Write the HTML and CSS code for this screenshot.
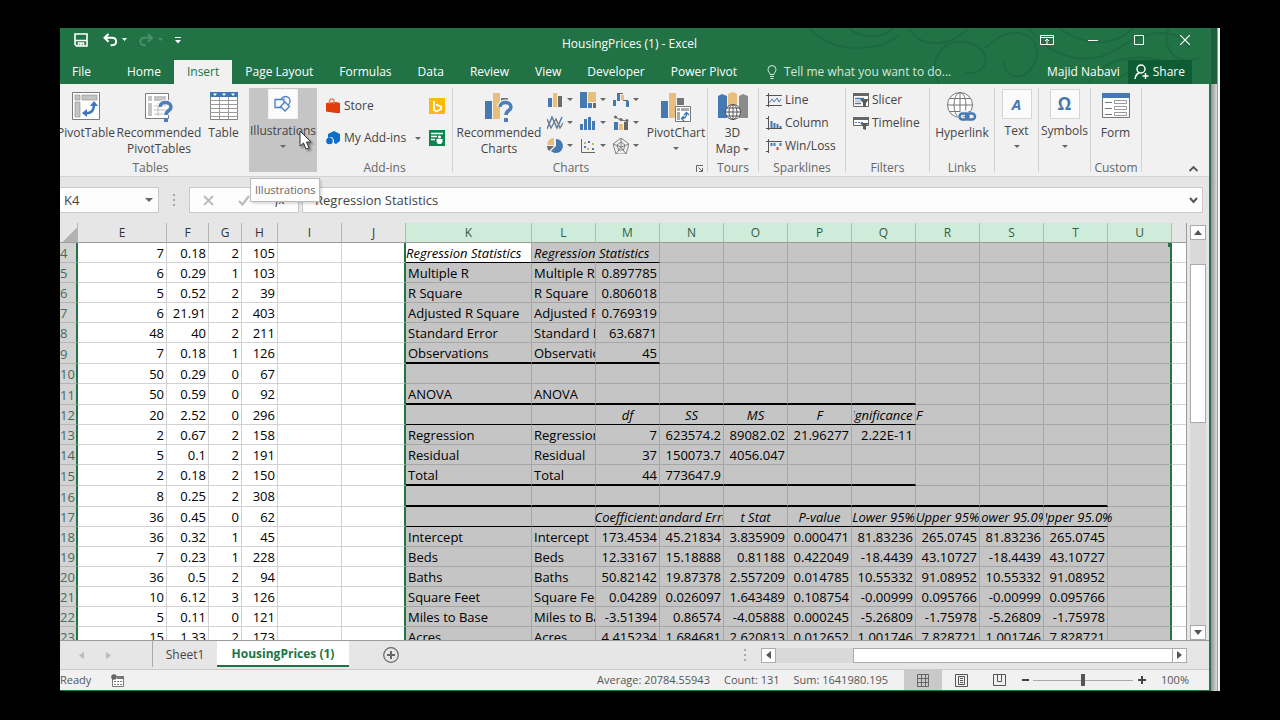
FILE: index.html
```html
<!DOCTYPE html>
<html lang="en">
<head>
<meta charset="utf-8">
<title>HousingPrices (1) - Excel</title>
<link rel="stylesheet" href="styles.css">
</head>
<body>
<main class="window">
  <header class="top">
    <svg class="swirls" width="420" height="56" viewBox="0 0 420 56" fill="none" stroke="#1d693f" stroke-width="2"><path d="M20 0c20 22 60 28 90 8M60 0c10 10 34 12 44 0M150 56c-14-30 10-50 34-40s10 34-8 28M196 20c30-30 60-10 50 14s-34 14-30 0M240 0c20 30 60 40 90 20s60-20 70 0M270 0c24 18 54 20 74 0M300 56c10-24 50-34 80-20M330 50c20-14 40-10 50 6M120 0c10 20 40 20 60 0M380 0c-10 20 10 40 30 30"/></svg>
    <div class="titlebar">
      <div class="quick">
        <button aria-label="Save"><svg width="14" height="14" viewBox="0 0 14 14" fill="none" stroke="#fff" stroke-width="1.6"><path d="M1 1h12v12H2.500L1 11.500zM1 7.500h12M4.500 13v-3h5v3M7 10.500v2"/></svg></button>
        <button aria-label="Undo"><svg width="24" height="14" viewBox="0 0 24 14" fill="none" stroke="#fff" stroke-width="2"><path d="M5.500 1 1.500 4.800l4 4M2 4.800h7c5 0 6 7 0 7.500H7.500"/><path d="M19 5h5l-2.500 3z" fill="#fff" stroke="none"/></svg></button>
        <button aria-label="Redo"><svg width="24" height="14" viewBox="0 0 24 14" fill="none" stroke="#4b8f69" stroke-width="2"><path d="m9 1 4 3.800-4 4M12.500 4.800h-7c-5 0-6 7 0 7.500H7"/><path d="M19 5h5l-2.500 3z" fill="#4b8f69" stroke="none"/></svg></button>
        <button aria-label="Customize"><svg width="6" height="7" viewBox="0 0 6 7" fill="#fff"><path d="M0 0h6v1H0zM0 3h6L3 6.500z"/></svg></button>
      </div>
      <h1 class="title">HousingPrices (1) - Excel</h1>
      <div class="controls">
        <button aria-label="Ribbon options"><svg width="14" height="12" viewBox="0 0 14 12" fill="none" stroke="#fff"><path d="M.5 1.500h13v9H.5zM.5 3.500h13M7 10V5M5 7l2-2 2 2"/></svg></button>
        <button aria-label="Minimize"><svg width="10" height="10" stroke="#fff"><path d="M0 5.500h10"/></svg></button>
        <button aria-label="Maximize"><svg width="10" height="10" fill="none" stroke="#fff"><path d="M.5.5h9v9h-9z"/></svg></button>
        <button aria-label="Close"><svg width="10" height="10" stroke="#fff" stroke-width="1.200"><path d="m0 0 10 10M10 0 0 10"/></svg></button>
      </div>
    </div>
    <nav class="tabs">
      <button class="file">File</button><button>Home</button><button class="on">Insert</button><button>Page Layout</button><button>Formulas</button><button>Data</button><button>Review</button><button>View</button><button>Developer</button><button>Power Pivot</button>
      <button class="tell"><svg width="10" height="14" viewBox="0 0 10 14" fill="none" stroke="#d5e8dc"><path d="M3 9.500C3 7.500 1 7 1 4.500a4 4 0 0 1 8 0C9 7 7 7.500 7 9.500zM3 11.500h4M3.500 13.500h3"/></svg>Tell me what you want to do...</button>
      <span class="user">Majid Nabavi</span>
      <button class="share"><svg width="15" height="16" viewBox="0 0 15 16" fill="none" stroke="#fff" stroke-width="1.500"><circle cx="7" cy="5" r="4"/><path d="M1 15c.5-3.500 2-5.500 4.500-6.500M11.500 9v6M8.500 12h6"/></svg>Share</button>
    </nav>
  </header>

  <section class="ribbon">
    <div class="group g-tables">
      <div class="items">
        <button class="big b60"><svg width="28" height="32" viewBox="0 0 28 32"><path d="M.5 1.500h27v27H.5z" fill="#fff" stroke="#7b7b7b"/><path d="M3 4h5v5H3zM10 4h15v5H10zM3 11h5v15H3z" fill="#c4c4c4" stroke="#8b8b8b" stroke-width=".6"/><path d="M12 22c7 1 10-2 10-9" fill="none" stroke="#3f76b8" stroke-width="2.500"/><path d="m18 15 4-5 4 5zM15 18l-5 4 5 4z" fill="#3f76b8"/></svg>PivotTable</button>
        <button class="big b86"><svg width="28" height="32" viewBox="0 0 28 32"><path d="M.5 2.500h23v25H.5z" fill="#fff" stroke="#7b7b7b"/><path d="M3 5h4v5H3zM9 5h12v5H9zM3 12h4v13H3z" fill="#c4c4c4"/><path d="M9 15h12M9 19h12M9 23h10M13 12v13" stroke="#bbb"/><path d="M15 16c0-6 11-6 11 0 0 4-5 3-5 8" fill="none" stroke="#f1f1f1" stroke-width="6"/><path d="M15 16c0-6 11-6 11 0 0 4-5 3-5 8" fill="none" stroke="#4b7fbb" stroke-width="3.500"/><path d="M19 27h4v4h-4z" fill="#4b7fbb"/></svg><span>Recommended</span><span>PivotTables</span></button>
        <button class="big b43"><svg width="28" height="32" viewBox="0 0 28 32"><path d="M.5 1.500h27v27H.5z" fill="#fff" stroke="#858585"/><path d="M0 1h28v5H0z" fill="#3f76b8"/><path d="M3 2.500h4l-2 2.500zM12 2.500h4L14 5zM21 2.500h4L23 5z" fill="#fff"/><path d="M0 9.500h28M0 13.500h28M0 17.500h28M0 21.500h28M0 25.500h28M9.500 6v22M18.500 6v22" stroke="#9a9a9a"/></svg>Table</button>
      </div>
      <h2>Tables</h2>
    </div>
    <button class="drop illus"><span class="tile"><svg width="18" height="18" viewBox="0 0 18 18" fill="#f4f6fa" stroke="#4c7fbe" stroke-width="1.300"><circle cx="11.500" cy="6" r="4.500"/><path d="M1 4.500h9v8H1z"/><path d="m11 7 4.500 4.500L11 16l-4.500-4.500z"/></svg></span>Illustrations<i class="arrow"></i></button>
    <div class="group g-addins">
      <div class="items addins">
        <button class="small"><svg width="14" height="16" viewBox="0 0 14 16"><path d="m0 5 10-1v11L0 13.500zM10 4l4 1v10h-4z" fill="#e23c0c"/><path d="M3.500 6V3.500C4 0 8 0 8 3.500V6" fill="none" stroke="#ef6e49" stroke-width="1.300"/></svg>Store</button>
        <button class="icon" aria-label="Bing Maps"><svg width="16" height="16" viewBox="0 0 16 16"><path d="M0 0h16v16H0z" fill="#fbb912"/><path d="M5 3v9l2.500 1.500L12 11V8.500L7 6.500" fill="none" stroke="#fff" stroke-width="1.800"/></svg></button>
        <button class="small"><svg width="14" height="14" viewBox="0 0 14 14" fill="#0b6fc4"><path d="M8 0l6 3v7l-4 3-2-1V9L6 6 2 7V3z"/><circle cx="3.500" cy="10" r="3.300"/></svg>My Add-ins<i class="arrow side"></i></button>
        <button class="icon" aria-label="People Graph"><svg width="16" height="16" viewBox="0 0 16 16"><path d="M0 0h16v16H0z" fill="#12834f"/><path d="M2 3.500h12M2 6.500h6M2 9.500h4" stroke="#fff" stroke-width="1.300"/><circle cx="10.500" cy="7" r="1.600" fill="#fff"/><path d="M7.500 9h6v3l-1.500 2H9l-1.500-2z" fill="#fff"/></svg></button>
      </div>
      <h2>Add-ins</h2>
    </div>
    <div class="group g-charts">
      <div class="items">
        <button class="big b92"><svg width="28" height="32" viewBox="0 0 28 32"><path d="M0 10h7v18H0z" fill="#4679b2"/><path d="M8 2h7v26H8z" fill="#e9bd7c"/><path d="M16 7h7v5h-7z" fill="#767676"/><path d="M15 16c0-6 11-6 11 0 0 4-5 3-5 8" fill="none" stroke="#f1f1f1" stroke-width="6"/><path d="M15 16c0-6 11-6 11 0 0 4-5 3-5 8" fill="none" stroke="#4b7fbb" stroke-width="3.500"/><path d="M19 27h4v4h-4z" fill="#4b7fbb"/></svg><span>Recommended</span><span>Charts</span></button>
        <div class="gallery">
          <button aria-label="Column"><svg width="16" height="16"><path d="M1 6h4v9H1z" fill="#4679b2"/><path d="M6 1h4v14H6z" fill="#e9bd7c"/><path d="M11 4h4v11h-4z" fill="#6b6b6b"/></svg><i class="arrow"></i></button>
          <button aria-label="Hierarchy"><svg width="16" height="16"><path d="M0 0h7v16H0z" fill="#4679b2"/><path d="M8 0h8v10H8z" fill="#e9bd7c"/><path d="M8 11h4v5H8z" fill="#4679b2"/><path d="M13 11h3v5h-3z" fill="#6b6b6b"/></svg><i class="arrow"></i></button>
          <button aria-label="Waterfall"><svg width="16" height="16"><path d="M0 8h3v6H0zM4 2h3v7H4zM13 9h3v6h-3z" fill="#4679b2"/><path d="M8 3h3v5H8z" fill="#e9bd7c"/><path d="M4 1.500h6M10 8.500h5" stroke="#666"/></svg><i class="arrow"></i></button>
          <button aria-label="Line"><svg width="16" height="16" fill="none" stroke-width="1.400"><path d="m0 14 5-12 5 11 5-11" stroke="#4679b2"/><path d="m0 4 4 9 5-9 4 9 3-5" stroke="#777"/></svg><i class="arrow"></i></button>
          <button aria-label="Statistic"><svg width="16" height="16" fill="#4679b2"><path d="M0 9h3v6H0zM4 4h3v11H4zM8 2h3v13H8zM12 6h3v9h-3z"/></svg><i class="arrow"></i></button>
          <button aria-label="Combo"><svg width="16" height="16"><path d="M1 7h4v8H1z" fill="#4679b2"/><path d="M6 9h4v6H6z" fill="#e9bd7c"/><path d="M11 7h4v8h-4z" fill="#666"/><path d="m2 2 6 3 6 1" stroke="#666" fill="none"/><circle cx="2.500" cy="2" r="1.500" fill="#666"/><circle cx="8" cy="4.500" r="1.500" fill="#666"/><circle cx="14" cy="5.500" r="1.500" fill="#666"/></svg><i class="arrow"></i></button>
          <button aria-label="Pie"><svg width="16" height="16"><path d="M9 1a7 7 0 1 1-5 12l5-5z" fill="#4679b2"/><path d="M7 0v7H0a7 7 0 0 1 7-7z" fill="#e9bd7c"/><path d="M0 8h7l-5 5a7 7 0 0 1-2-5z" fill="#6b6b6b"/></svg><i class="arrow"></i></button>
          <button aria-label="Scatter"><svg width="16" height="16"><path d="M1.500 1v13.500H15" stroke="#666" fill="none"/><path d="M4 8h2v2H4zM8 3h2v2H8zM12 10h2v2h-2z" fill="#4679b2"/><path d="M7 10h2v2H7zM12 5h2v2h-2zM4 4h2v2H4z" fill="#c3b95f"/></svg><i class="arrow"></i></button>
          <button aria-label="Radar"><svg width="16" height="16" viewBox="0 0 16 16" fill="none" stroke="#777" stroke-width=".9"><path d="m8 0 8 6-3 10H3L0 6zM8 4l4 3-1.500 5h-5L4 7zM8 0v9M16 6 8 9l5 7M3 16l5-7-8-3"/></svg><i class="arrow"></i></button>
        </div>
        <button class="big b60"><svg width="30" height="32" viewBox="0 0 30 32"><path d="M0 10h7v17H0z" fill="#4679b2"/><path d="M8 2h7v25H8z" fill="#e9bd7c"/><path d="M16 7h7v7h-7z" fill="#767676"/><path d="M14.500 15.500h15v15h-15z" fill="#fff" stroke="#777"/><path d="M16 17h3v3h-3zM20 17h8v3h-8zM16 21h3v8h-3z" fill="#aaa"/><path d="M21 27.500c3 0 4.500-1 4.500-5M23 25l-2.500 2.500L23 30M23 24l2.500-2.500L28 24" fill="none" stroke="#3f76b8" stroke-width="1.300"/></svg>PivotChart<i class="arrow"></i></button>
      </div>
      <h2>Charts<svg class="launch" width="7" height="7" viewBox="0 0 7 7" fill="none" stroke="#666"><path d="M.5 7V.5H7M2.500 2.500l4 4M6.500 3v3.500H3"/></svg></h2>
    </div>
    <div class="group g-tours"><div class="items">
      <button class="big b49"><svg width="30" height="32" viewBox="0 0 30 32"><path d="m0 5 4-2 5 2v22H0z" fill="#4679b2"/><path d="m10 3 5-2 4 2v22h-9z" fill="#e9bd7c"/><path d="m21 5 4-2 5 2v22h-9z" fill="#8b8b8b"/><circle cx="15" cy="21" r="7.500" fill="#fff" stroke="#555"/><path d="M15 13.500v15M7.500 21h15M9 17h12M9 25h12" stroke="#555" fill="none"/><ellipse cx="15" cy="21" rx="4" ry="7.500" fill="none" stroke="#555"/></svg><span>3D</span><span>Map <i class="arrow side"></i></span></button>
    </div><h2>Tours</h2></div>
    <div class="group g-spark"><div class="items list">
      <button class="small"><svg width="16" height="14" fill="none" stroke="#555"><path d="M2.500 0v14M0 2.500h16M0 12.500h16"/><path d="m3 10 3-4 2 3 3-4 2 4 2-3" stroke="#4679b2"/></svg>Line</button>
      <button class="small"><svg width="16" height="14" fill="none" stroke="#555"><path d="M2.500 0v14M0 2.500h3M0 12.500h16"/><path d="M5.500 12V5M8.500 12V7M11.500 12V8M14.500 12v-2" stroke="#4679b2" stroke-width="2"/></svg>Column</button>
      <button class="small"><svg width="16" height="14" fill="none" stroke="#555"><path d="M2.500 0v14M0 2.500h16M0 12.500h3"/><path d="M5.500 4v3M8.500 4v3M14.500 4v3" stroke="#4679b2" stroke-width="2"/><path d="M11.500 8v3" stroke="#d43" stroke-width="2"/></svg>Win/Loss</button>
    </div><h2>Sparklines</h2></div>
    <div class="group g-filters"><div class="items list">
      <button class="small"><svg width="16" height="16" viewBox="0 0 16 16"><path d="M.5 1.500h15v13H.5z" fill="#fff" stroke="#666"/><path d="M0 1h16v3H0z" fill="#666"/><path d="M2 6.500h9M2 11.500h6" stroke="#4679b2" stroke-width="1.600"/><path d="M2 9h6" stroke="#999"/><path d="M7 7h9l-3 4v4l-3-1v-3z" fill="#5c5c5c"/></svg>Slicer</button>
      <button class="small"><svg width="16" height="16" viewBox="0 0 16 16"><path d="M.5 2.500h15v8H.5z" fill="#fff" stroke="#666"/><path d="M0 2h16v3H0z" fill="#666"/><path d="M2 7.500h8" stroke="#4679b2" stroke-dasharray="2 1"/><path d="M7 8h9l-3 3v4l-3-1v-3z" fill="#5c5c5c"/></svg>Timeline</button>
    </div><h2>Filters</h2></div>
    <div class="group g-links"><div class="items">
      <button class="big b64"><svg width="30" height="32" viewBox="0 0 30 32" fill="none" stroke="#777"><circle cx="13" cy="14" r="12.500" fill="#fff"/><path d="M13 1.500v25M.5 14h25M3 7.500h20M3 20.500h20"/><ellipse cx="13" cy="14" rx="6" ry="12.500"/><rect x="13" y="22" width="9" height="7" rx="3.500" stroke="#f1f1f1" stroke-width="5"/><rect x="12.500" y="22.500" width="9" height="6" rx="3" stroke="#4679b2" stroke-width="2.500"/><rect x="19" y="22.500" width="9" height="6" rx="3" stroke="#4679b2" stroke-width="2.500"/></svg>Hyperlink</button>
    </div><h2>Links</h2></div>
    <button class="drop d-text"><span class="tile"><b class="glyph">A</b></span>Text<i class="arrow"></i></button>
    <button class="drop d-sym"><span class="tile"><b class="glyph omega">Ω</b></span>Symbols<i class="arrow"></i></button>
    <div class="group g-custom"><div class="items">
      <button class="big b49"><svg width="28" height="32" viewBox="0 0 28 32"><path d="M.5 2.500h27v24H.5z" fill="#fff" stroke="#777"/><path d="M0 2h28v5H0z" fill="#4679b2"/><path d="M3 11.500h7M3 17.500h7M3 23.500h7" stroke="#777"/><path d="M12.500 9.500h12v3h-12zM12.500 15.500h12v3h-12zM12.500 21.500h12v3h-12z" fill="none" stroke="#999"/></svg>Form</button>
    </div><h2>Custom</h2></div>
    <button class="collapse" aria-label="Collapse ribbon"><svg width="9" height="6" fill="none" stroke="#555" stroke-width="1.800"><path d="m.5 5 4-4 4 4"/></svg></button>
    <div class="tooltip">Illustrations</div>
    <svg class="pointer" width="14" height="21" viewBox="0 0 14 21"><path d="M1 1v15l3.500-3 2.500 6 3-1.200L7.500 12H12z" fill="#fff" stroke="#333"/></svg>
  </section>

  <div class="formula">
    <label class="name"><input value="K4" aria-label="Name box"><i class="arrow wide"></i></label>
    <span class="dots"></span>
    <div class="fx">
      <button aria-label="Cancel"><svg width="11" height="11" stroke="#bbb" stroke-width="1.800"><path d="m1 1 9 9M10 1l-9 9"/></svg></button>
      <button aria-label="Enter"><svg width="12" height="11" stroke="#bbb" stroke-width="2.200" fill="none"><path d="m1 6 3.500 3.500L11 1"/></svg></button>
      <button aria-label="Insert function"><em>fx</em></button>
    </div>
    <label class="entry"><input value="Regression Statistics" aria-label="Formula"><svg width="9" height="7" fill="none" stroke="#555" stroke-width="2"><path d="m1 1 3.500 4L8 1"/></svg></label>
  </div>

  <section class="sheet">
    <div class="cells">
      <table>
        <colgroup><col class="c-row"><col class="c-e"><col class="c-f"><col class="c-g"><col class="c-h"><col class="c"><col class="c"><col class="c-k"><col class="c"><col class="c"><col class="c"><col class="c"><col class="c"><col class="c"><col class="c"><col class="c"><col class="c"><col class="c"><col></colgroup>
        <thead><tr><th class="corner"></th><th>E</th><th>F</th><th>G</th><th>H</th><th>I</th><th>J</th><th>K</th><th>L</th><th>M</th><th>N</th><th>O</th><th>P</th><th>Q</th><th>R</th><th>S</th><th>T</th><th>U</th><th></th></tr></thead>
        <tbody>
        <tr class="thin to-m"><th>4</th><td>7</td><td>0.18</td><td>2</td><td>105</td><td></td><td></td><td class="active">Regression Statistics</td><td class="it spill">Regression Statistics</td><td></td><td></td><td></td><td></td><td></td><td></td><td></td><td></td><td class="corner-mark"></td><td></td></tr>
        <tr><th>5</th><td>6</td><td>0.29</td><td>1</td><td>103</td><td></td><td></td><td>Multiple R</td><td>Multiple R</td><td>0.897785</td><td></td><td></td><td></td><td></td><td></td><td></td><td></td><td></td><td></td></tr>
        <tr><th>6</th><td>5</td><td>0.52</td><td>2</td><td>39</td><td></td><td></td><td>R Square</td><td>R Square</td><td>0.806018</td><td></td><td></td><td></td><td></td><td></td><td></td><td></td><td></td><td></td></tr>
        <tr><th>7</th><td>6</td><td>21.91</td><td>2</td><td>403</td><td></td><td></td><td>Adjusted R Square</td><td>Adjusted R Square</td><td>0.769319</td><td></td><td></td><td></td><td></td><td></td><td></td><td></td><td></td><td></td></tr>
        <tr><th>8</th><td>48</td><td>40</td><td>2</td><td>211</td><td></td><td></td><td>Standard Error</td><td>Standard Error</td><td>63.6871</td><td></td><td></td><td></td><td></td><td></td><td></td><td></td><td></td><td></td></tr>
        <tr class="tall thick to-m"><th>9</th><td>7</td><td>0.18</td><td>1</td><td>126</td><td></td><td></td><td>Observations</td><td>Observations</td><td>45</td><td></td><td></td><td></td><td></td><td></td><td></td><td></td><td></td><td></td></tr>
        <tr><th>10</th><td>50</td><td>0.29</td><td>0</td><td>67</td><td></td><td></td><td></td><td></td><td></td><td></td><td></td><td></td><td></td><td></td><td></td><td></td><td></td><td></td></tr>
        <tr class="tall thick to-q"><th>11</th><td>50</td><td>0.59</td><td>0</td><td>92</td><td></td><td></td><td>ANOVA</td><td>ANOVA</td><td></td><td></td><td></td><td></td><td></td><td></td><td></td><td></td><td></td><td></td></tr>
        <tr class="thin to-q heads"><th>12</th><td>20</td><td>2.52</td><td>0</td><td>296</td><td></td><td></td><td></td><td></td><td><span>df</span></td><td><span>SS</span></td><td><span>MS</span></td><td><span>F</span></td><td class="spill"><span class="over-right">Significance F</span></td><td></td><td></td><td></td><td></td><td></td></tr>
        <tr><th>13</th><td>2</td><td>0.67</td><td>2</td><td>158</td><td></td><td></td><td>Regression</td><td>Regression</td><td>7</td><td>623574.2</td><td>89082.02</td><td>21.96277</td><td>2.22E-11</td><td></td><td></td><td></td><td></td><td></td></tr>
        <tr><th>14</th><td>5</td><td>0.1</td><td>2</td><td>191</td><td></td><td></td><td>Residual</td><td>Residual</td><td>37</td><td>150073.7</td><td>4056.047</td><td></td><td></td><td></td><td></td><td></td><td></td><td></td></tr>
        <tr class="tall thick to-q"><th>15</th><td>2</td><td>0.18</td><td>2</td><td>150</td><td></td><td></td><td>Total</td><td>Total</td><td>44</td><td>773647.9</td><td></td><td></td><td></td><td></td><td></td><td></td><td></td><td></td></tr>
        <tr class="tall thick to-t"><th>16</th><td>8</td><td>0.25</td><td>2</td><td>308</td><td></td><td></td><td></td><td></td><td></td><td></td><td></td><td></td><td></td><td></td><td></td><td></td><td></td><td></td></tr>
        <tr class="thin to-t heads"><th>17</th><td>36</td><td>0.45</td><td>0</td><td>62</td><td></td><td></td><td></td><td></td><td class="spill"><span class="over-left">Coefficients</span></td><td><span>Standard Error</span></td><td><span>t Stat</span></td><td><span>P-value</span></td><td><span>Lower 95%</span></td><td><span>Upper 95%</span></td><td><span>Lower 95.0%</span></td><td class="spill"><span class="over-right">Upper 95.0%</span></td><td></td><td></td></tr>
        <tr><th>18</th><td>36</td><td>0.32</td><td>1</td><td>45</td><td></td><td></td><td>Intercept</td><td>Intercept</td><td>173.4534</td><td>45.21834</td><td>3.835909</td><td>0.000471</td><td>81.83236</td><td>265.0745</td><td>81.83236</td><td>265.0745</td><td></td><td></td></tr>
        <tr><th>19</th><td>7</td><td>0.23</td><td>1</td><td>228</td><td></td><td></td><td>Beds</td><td>Beds</td><td>12.33167</td><td>15.18888</td><td>0.81188</td><td>0.422049</td><td>-18.4439</td><td>43.10727</td><td>-18.4439</td><td>43.10727</td><td></td><td></td></tr>
        <tr><th>20</th><td>36</td><td>0.5</td><td>2</td><td>94</td><td></td><td></td><td>Baths</td><td>Baths</td><td>50.82142</td><td>19.87378</td><td>2.557209</td><td>0.014785</td><td>10.55332</td><td>91.08952</td><td>10.55332</td><td>91.08952</td><td></td><td></td></tr>
        <tr><th>21</th><td>10</td><td>6.12</td><td>3</td><td>126</td><td></td><td></td><td>Square Feet</td><td>Square Feet</td><td>0.04289</td><td>0.026097</td><td>1.643489</td><td>0.108754</td><td>-0.00999</td><td>0.095766</td><td>-0.00999</td><td>0.095766</td><td></td><td></td></tr>
        <tr><th>22</th><td>5</td><td>0.11</td><td>0</td><td>121</td><td></td><td></td><td>Miles to Base</td><td>Miles to Base</td><td>-3.51394</td><td>0.86574</td><td>-4.05888</td><td>0.000245</td><td>-5.26809</td><td>-1.75978</td><td>-5.26809</td><td>-1.75978</td><td></td><td></td></tr>
        <tr><th>23</th><td>15</td><td>1.33</td><td>2</td><td>173</td><td></td><td></td><td>Acres</td><td>Acres</td><td>4.415234</td><td>1.684681</td><td>2.620813</td><td>0.012652</td><td>1.001746</td><td>7.828721</td><td>1.001746</td><td>7.828721</td><td></td><td></td></tr>
        </tbody>
      </table>
    </div>
    <div class="vscroll">
      <button aria-label="Scroll up"><svg width="8" height="5" fill="#555"><path d="M0 5 4 0l4 5z"/></svg></button>
      <div class="track"><div class="thumb"></div></div>
      <button aria-label="Scroll down"><svg width="8" height="5" fill="#555"><path d="M0 0h8L4 5z"/></svg></button>
    </div>
  </section>

  <nav class="sheets">
    <button class="step" aria-label="Previous sheet"><svg width="5" height="7" fill="#bbb"><path d="M5 0v7L0 3.500z"/></svg></button>
    <button class="step" aria-label="Next sheet"><svg width="5" height="7" fill="#bbb"><path d="M0 0v7l5-3.500z"/></svg></button>
    <button class="tab first">Sheet1</button>
    <button class="tab current">HousingPrices (1)</button>
    <button class="add" aria-label="New sheet"><svg width="16" height="16" fill="none" stroke="#666" stroke-width="1.200"><circle cx="8" cy="8" r="7.300"/><path d="M8 4v8M4 8h8" stroke-width="2"/></svg></button>
    <span class="dots"></span>
    <div class="hscroll">
      <button aria-label="Scroll left"><svg width="5" height="8" fill="#555"><path d="M5 0v8L0 4z"/></svg></button>
      <div class="space"></div><div class="thumb"></div>
      <button aria-label="Scroll right"><svg width="5" height="8" fill="#555"><path d="M0 0v8l5-4z"/></svg></button>
    </div>
  </nav>

  <footer class="status">
    <span>Ready</span>
    <button class="macro" aria-label="Record macro"><svg width="13" height="13"><path d="M1.500 5v7.500h11V2.500H6" fill="#fff" stroke="#777"/><path d="M6 2h7v3H6z" fill="#777"/><path d="M3 7.500h8M3 10.500h8" stroke="#777" stroke-dasharray="2 1"/><circle cx="3" cy="3" r="2.800" fill="#666"/></svg></button>
    <span class="stats"><span>Average: 20784.55943</span><span>Count: 131</span><span>Sum: 1641980.195</span></span>
    <button class="view on" aria-label="Normal view"><svg width="12" height="13" fill="none" stroke="#666"><path d="M.5.5h11v12H.5zM4.500 0v13M8.500 0v13M0 4.500h12M0 8.500h12"/></svg></button>
    <button class="view" aria-label="Page layout view"><svg width="13" height="13" fill="none" stroke="#555"><path d="M.5.5h12v12H.5zM3.500 2.500h6v8h-6zM5 4.500h3M5 6.500h3M5 8.500h3"/></svg></button>
    <button class="view" aria-label="Page break view"><svg width="13" height="12" fill="none" stroke="#555"><path d="M.5.5h12v11H.5zM4.500 0v7.500h4V0"/></svg></button>
    <button class="zoom" aria-label="Zoom out"><svg width="7" height="8" stroke="#444" stroke-width="2"><path d="M0 4h7"/></svg></button>
    <input class="slider" type="range" value="50" aria-label="Zoom">
    <button class="zoom" aria-label="Zoom in"><svg width="8" height="8" stroke="#444" stroke-width="2"><path d="M0 4h8M4 0v8"/></svg></button>
    <span class="percent">100%</span>
  </footer>
</main>
<aside class="edge"></aside>
<aside class="behind"></aside>
</body>
</html>
```

FILE: styles.css
```css
* { box-sizing: border-box; }
body { margin: 0; background: #000; height: 100vh; padding: 28px 60px 29px; display: flex; font: 12px/16px "Open Sans", "Noto Sans", sans-serif; color: #444; }
button, input { font: inherit; color: inherit; background: none; border: 0; padding: 0; margin: 0; }
button { white-space: nowrap; }
svg { display: block; flex: none; }
h1, h2 { margin: 0; font: inherit; }

.window { flex: 1; min-width: 0; display: flex; flex-direction: column; background: #e6e6e6; border-bottom: 1px solid #217346; overflow: hidden; }
.edge { flex: 0 0 8px; border-left: 2px solid #2c6e52; background: linear-gradient(#1c6039 56px, transparent 56px), linear-gradient(90deg, #929292, #dadada); }
.behind { flex: 0 0 3px; background: #f2f5f6; border-left: 1px solid #999; }

/* Title bar and tabs */
.top { position: relative; background: #217346; color: #fff; }
.swirls { position: absolute; right: 0; top: 0; }
.titlebar { position: relative; display: grid; grid-template-columns: 1fr auto 1fr; align-items: center; height: 32px; }
.quick { display: flex; align-items: center; gap: 12px; padding: 0 0 8px 14px; }
.quick button:nth-child(2) { margin-left: 3px; }
.title { padding-right: 10px; }
.controls { display: flex; justify-content: flex-end; padding: 0 1px 8px 0; }
.controls button { width: 46px; height: 24px; display: flex; align-items: center; justify-content: center; }
.tabs { position: relative; display: flex; height: 24px; align-items: stretch; }
.tabs > button { padding: 0 13px; }
.tabs .file { padding: 0 23px 0 12px; }
.tabs .on { background: #f1f1f1; color: #217346; }
.tabs .tell { display: flex; align-items: center; gap: 7px; color: #d5e8dc; padding-left: 17px; }
.user { margin-left: auto; padding: 4px 8px; }
.tabs .share { display: flex; align-items: center; gap: 4px; background: #0e5c33; margin-right: 17px; padding: 0 7px 0 6px; }

/* Ribbon */
.ribbon { position: relative; display: flex; height: 93px; padding: 4px 0; background: #f1f1f1; border-bottom: 1px solid #d2d2d2; }
.group { display: flex; flex-direction: column; border-right: 1px solid #d2d2d2; flex: none; }
.items { display: flex; flex: 1; }
.group h2 { position: relative; color: #666; height: 8px; display: flex; align-items: center; justify-content: center; }
.g-tables { width: 193px; margin-left: -4px; border: 0; padding-right: 4px; }
.g-addins { width: 136px; }
.g-charts { width: 255px; }
.g-tours { width: 51px; }
.g-spark { width: 87px; }
.g-filters { width: 84px; }
.g-links { width: 65px; }
.g-custom { width: 51px; }
.g-charts h2 { padding-right: 18px; }
.launch { position: absolute; right: 4px; top: 1px; }
.big { display: flex; flex-direction: column; align-items: center; padding-top: 3px; line-height: 16px; }
.big > svg { margin-bottom: 2px; }
.b43 { width: 43px; } .b49 { width: 49px; } .b60 { width: 60px; } .b64 { width: 64px; } .b86 { width: 86px; } .b92 { width: 92px; }
.arrow { width: 0; height: 0; border: 3px solid transparent; border-top-color: #666; border-bottom: 0; flex: none; }
.arrow.wide { border-width: 4px 4px 0; }
.arrow.side { display: inline-block; vertical-align: middle; }
.big > .arrow, .drop > .arrow { margin-top: 6px; }
.drop { display: flex; flex-direction: column; align-items: center; padding-top: 1px; flex: none; border-right: 1px solid #d2d2d2; height: 84px; }
.tile { width: 30px; height: 30px; display: flex; align-items: center; justify-content: center; background: #fbfbfb; border: 1px solid #d6d6d6; margin-bottom: 4px; }
.illus { width: 68px; background: #c5c5c5; border: 0; }
.illus .tile { border-color: #f0f0f0; }
.d-text { width: 44px; }
.d-sym { width: 52px; }
.glyph { color: #4679b2; font-size: 15px; font-style: italic; }
.omega { font-style: normal; font-size: 17px; }
.addins { display: grid; grid-template-columns: 103px 16px; grid-template-rows: 32px 32px; align-content: start; align-items: center; padding: 2px 0 0 9px; }
.small { display: flex; align-items: center; gap: 3px; height: 23px; }
.addins .small { gap: 4px; }
.addins .arrow { margin-left: auto; margin-right: 8px; }
.gallery { display: grid; grid-template-columns: repeat(3, 33px); grid-template-rows: repeat(3, 23px); align-content: start; margin-left: 2px; }
.gallery button { display: flex; align-items: center; gap: 4px; }
.list { flex-direction: column; padding-left: 7px; }
.collapse { margin: auto 11px 0 auto; }
.tooltip { position: absolute; left: 190px; top: 94px; height: 24px; padding: 3px 4px; background: #fdfdfd; border: 1px solid #bbb; color: #666; font-size: 11px; box-shadow: 2px 2px 2px #0002; z-index: 2; }
.pointer { position: absolute; left: 239px; top: 46px; filter: drop-shadow(2px 2px 1px #0006); }

/* Formula bar */
.formula { display: flex; padding: 10px 6px 10px 0; height: 46px; font-size: 13px; }
.formula > label, .fx { display: flex; align-items: center; background: #fdfdfd; border: 1px solid #c9c9c9; }
.formula input { flex: 1; min-width: 0; }
.name { width: 99px; padding: 0 5px 0 4px; border-left: 0 !important; }
.dots { width: 2px; height: 12px; margin: auto 15px; background: repeating-linear-gradient(#aaa 0 2px, transparent 2px 5px); }
.formula .dots { margin-left: 14px; margin-right: 14px; }
.fx { width: 110px; margin-right: 3px; }
.fx button { flex: 1; display: flex; justify-content: center; }
.fx em { font-family: "Liberation Serif", serif; }
.formula .entry { flex: 1; padding: 0 4px 0 12px; }

/* Worksheet */
.sheet { flex: 1; min-height: 0; display: flex; border-bottom: 1px solid #9b9b9b; }
.cells { flex: 1; min-width: 0; overflow: hidden; border-right: 1px solid #9b9b9b; }
table { width: 100%; table-layout: fixed; border-collapse: separate; border-spacing: 0; font: 13px/18px "Open Sans", "Noto Sans", sans-serif; color: #000; background: #fff; }
.c-row { width: 18px; } .c-e { width: 89px; } .c-f { width: 42px; } .c-g { width: 33px; } .c-h { width: 36px; } .c { width: 64px; } .c-k { width: 126px; }
thead th { height: 20px; background: #e6e6e6; border-right: 1px solid #b5b5b5; border-bottom: 1px solid #9b9b9b; font-weight: 400; padding: 0; color: #333; font-size: 12px; }
thead th:nth-child(n+8):nth-child(-n+18) { background: #cfecdb; color: #315c46; border-right-color: #a5c4b2; }
thead th:last-child { border-right: 0; }
.corner { background: linear-gradient(135deg, #e6e6e6 60%, #b3b3b3 60%) !important; }
tbody th { background: #d3d3d3; color: #466b58; font-weight: 400; text-align: left; padding: 1px 0 0; border-right: 2px solid #217346; border-bottom: 1px solid #b5b5b5; height: 20px; }
td { height: 20px; padding: 1px 2px 0; text-align: right; border-right: 1px solid #d2d2d2; border-bottom: 1px solid #d2d2d2; white-space: nowrap; overflow: hidden; }
td:nth-child(7) { border-right: 2px solid #217346; }
td:nth-child(n+8):nth-child(-n+18) { background: #c5c5c5; border-color: #a6a6a6; }
td:nth-child(8), td:nth-child(9) { text-align: left; }
td:nth-child(18) { border-right: 2px solid #217346 !important; }
td:nth-child(19) { border-right: 0; }
td.corner-mark:nth-child(18):nth-child(n+8) { background: linear-gradient(#217346, #217346) right top / 2px 4px no-repeat #c5c5c5; }
.tall td, .tall th { height: 21px; }
.thick td { line-height: 17px; }
.thin.to-m td:nth-child(n+8):nth-child(-n+10), .thin.to-q td:nth-child(n+8):nth-child(-n+14), .thin.to-t td:nth-child(n+8):nth-child(-n+17) { border-bottom: 1px solid #000; }
.thick.to-m td:nth-child(n+8):nth-child(-n+10), .thick.to-q td:nth-child(n+8):nth-child(-n+14), .thick.to-t td:nth-child(n+8):nth-child(-n+17) { border-bottom: 2px solid #000; }
td.active { font-style: italic; padding: 1px 0 0; }
tr td.active:nth-child(8):nth-child(n+8) { background: #fff; }
.it { font-style: italic; }
.spill { overflow: visible; }
.thin td.spill:nth-child(9) { border-right-color: #c5c5c5; }
.heads td span { display: flex; justify-content: center; font-style: italic; }
.over-right { clip-path: inset(0 -40px 0 0); }
.over-left { clip-path: inset(0 0 0 -40px); }

/* Scroll bars */
.vscroll { width: 22px; padding: 2px 3px 0; display: flex; flex-direction: column; }
.vscroll button { width: 16px; height: 15px; background: #fff; border: 1px solid #aaa; display: flex; align-items: center; justify-content: center; }
.track { flex: 1; background: #d9d9d9; padding-top: 24px; }
.vscroll .thumb { height: 44%; width: 16px; background: #fff; border: 1px solid #aaa; }
.hscroll { flex: 0 1 426px; display: flex; height: 15px; margin-right: 22px; }
.hscroll button { width: 15px; background: #fff; border: 1px solid #aaa; display: flex; align-items: center; justify-content: center; }
.space { width: 77px; background: #d9d9d9; }
.hscroll .thumb { flex: 1; background: #fff; border: 1px solid #aaa; border-right: 0; }

/* Sheet tabs */
.sheets { display: flex; height: 28px; align-items: center; }
.step { width: 27px; display: flex; justify-content: center; margin-left: 8px; }
.step + .step { margin-left: 0; }
.tab { height: 26px; align-self: flex-start; padding-top: 2px; }
.first { margin-left: 30px; width: 65px; border-left: 1px solid #aaa; }
.current { width: 132px; background: #fff; color: #217346; font-weight: 700; border-bottom: 2px solid #217346; }
.add { margin-left: 34px; }
.sheets .dots { margin-left: auto; }

/* Status bar */
.status { display: flex; align-items: center; height: 21px; background: #f1f1f1; border-top: 1px solid #cacaca; font-size: 11px; color: #555; }
.macro { margin-left: 20px; }
.stats { margin-left: auto; margin-right: 16px; display: flex; gap: 14px; }
.view { width: 38px; height: 20px; display: flex; align-items: center; justify-content: center; }
.view.on { background: #c9c9c9; }
.zoom { margin-left: 4px; }
.slider { appearance: none; width: 100px; height: 12px; margin: 0 1px 0 4px; background: linear-gradient(#aaa, #aaa) center / 100% 1px no-repeat; }
.slider::-webkit-slider-thumb { appearance: none; width: 4px; height: 12px; background: #555; }
.percent { margin: 0 20px 0 15px; }
```
